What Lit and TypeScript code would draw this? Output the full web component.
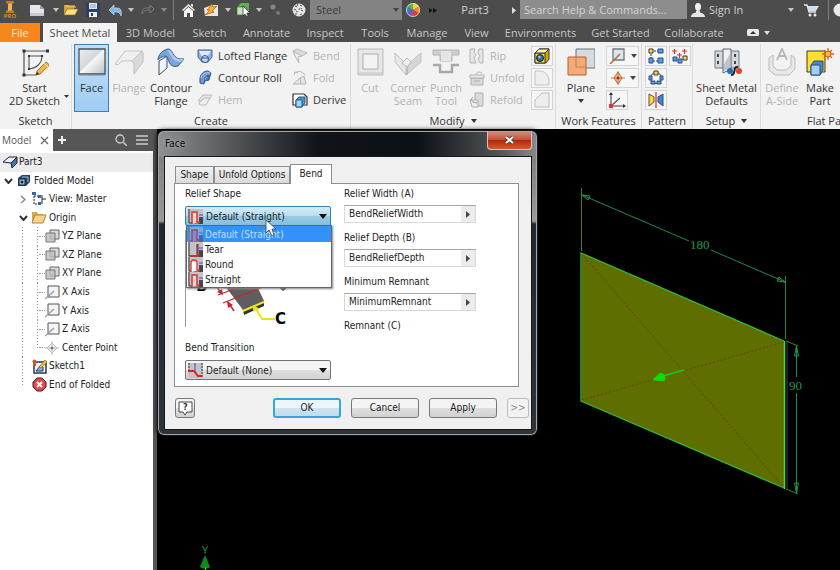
import { LitElement, html, svg, css, nothing } from "lit";
import type { SVGTemplateResult, TemplateResult } from "lit";
import { customElement } from "lit/decorators.js";
import { classMap } from "lit/directives/class-map.js";

const icon = (w: number, h: number, body: SVGTemplateResult) =>
  html`<svg class="icon" width=${w} height=${h} viewBox="0 0 ${w} ${h}" aria-hidden="true">${body}</svg>`;

const base = css`
  * { box-sizing: border-box; }
  svg { display: block; flex: none; }
  button, input, select { font: inherit; color: inherit; margin: 0; padding: 0; border: 0; background: none; border-radius: 0; }
  ul { list-style: none; margin: 0; padding: 0; }
`;

/* ---------- Quick access bar ---------- */

const caret = (fill: string) => icon(6, 4, svg`<path d="M0 0H6L3 4Z" fill=${fill}/>`);

const quick = {
  logo: icon(12, 12, svg`<path d="M2 0H10V2L8 3V9L10 10V12H2V10L4 9V3L2 2Z" fill="#c07a35"/><path d="M4 3L8 2V9L4 10Z" fill="#f3b35c"/>`),
  new: icon(14, 11, svg`<path d="M0 0H10L14 4V11H0Z" fill="#e4e6ea"/><path d="M10 0V4H14Z" fill="#9aa0a8"/><path d="M0 8H14V11H0Z" fill="#c5c9d0"/>`),
  open: icon(15, 12, svg`<path d="M1 11V1H5L6 2H11V5H4Z" fill="#d9a33a"/><path d="M1 11L4 5H15L12 11Z" fill="#ffe08a" stroke="#8a6a20" stroke-width=".7"/><path d="M3 2H12V4" stroke="#ffd35a" fill="none"/>`),
  save: icon(14, 14, svg`<path d="M0 0H14V14H1L0 13Z" fill="#27406e"/><path d="M3 0H11V6H3Z" fill="#dfe8f4"/><path d="M3 9H11V14H3Z" fill="#f1f1f1"/><path d="M5 10H7V13H5Z" fill="#27406e"/><path d="M4 2H10M4 4H10" stroke="#8aa"/>`),
  undo: icon(15, 11, svg`<path d="M1 5L6 0V3H9C13 3 14 6 13 11C12 8 11 7 8 7H6V10Z" fill="#7db4ea" stroke="#d6e8fa" stroke-width=".6"/>`),
  redo: icon(14, 10, svg`<path d="M13 4L9 0V3H6C2 3 1 5 1 9C3 6 4 5 7 5H9V8Z" fill="none" stroke="#7c7c7c"/>`),
  home: icon(13, 13, svg`<path d="M6.500 0L13 6L12 7L6.500 2L1 7L0 6Z" fill="#eee"/><path d="M2 7L6.500 3L11 7V13H8V9H5V13H2Z" fill="#f4f4f4"/><path d="M9 0H11V3L9 2Z" fill="#ddd"/>`),
  update: icon(15, 13, svg`<path d="M0 4L8 1H14V12H1Z" fill="#e8e8e8"/><path d="M8 0L3 6H6L1 11L10 8L8 7L13 2L9 3Z" fill="#f7b431" stroke="#b5650e" stroke-width=".8"/>`),
  select: icon(14, 14, svg`<path d="M0 4L4 0H12V8L9 12H0Z" fill="#5fae4f"/><path d="M0 4H9V12H0Z" fill="#c9dfc2" stroke="#2f7a28" stroke-width=".7"/><path d="M6 3V13L8 11L10 14L11 13L10 10H13Z" fill="#fff" stroke="#222" stroke-width=".7"/>`),
  dots: icon(10, 12, svg`<circle cx="3" cy="3" r="2.500" fill="#888"/><circle cx="8" cy="9" r="2" fill="#777"/>`),
  ball: icon(14, 14, svg`<circle cx="7" cy="7" r="6.500" fill="#e4e4e4"/><path d="M3 3L5 4M8 2L10 3M4 8L6 9M9 7L11 8M6 1L5 3M2 6L4 7M8 12L10 11M8 5L7 7M10 5L9 6M3 11L5 11" stroke="#555" stroke-width="1"/>`),
  wheel: icon(14, 14, svg`<path d="M7 7L7 0A7 7 0 0 1 13.100 3.500Z" fill="#f0d23a"/><path d="M7 7L13.100 3.500A7 7 0 0 1 13.100 10.500Z" fill="#f08a2c"/><path d="M7 7L13.100 10.500A7 7 0 0 1 7 14Z" fill="#dc4030"/><path d="M7 7V14A7 7 0 0 1 .9 10.500Z" fill="#8b4fb5"/><path d="M7 7L.9 10.500A7 7 0 0 1 .9 3.500Z" fill="#3c78d8"/><path d="M7 7L.9 3.500A7 7 0 0 1 7 0Z" fill="#58b548"/><circle cx="7" cy="7" r="6.500" fill="none" stroke="#ddd" stroke-width=".8"/>`),
  more: icon(8, 5, svg`<path d="M0 0L3.500 2.500L0 5ZM4 0L8 2.500L4 5Z" fill="#111"/>`),
  right: icon(4, 7, svg`<path d="M0 0L4 3.500L0 7Z" fill="#ddd"/>`),
  person: icon(14, 14, svg`<path d="M7 0C9.500 0 10 2 10 4S9 8 7 8S4 6 4 4S4.500 0 7 0Z" fill="#eee"/><path d="M0 14C0 11 3 10 5 9.500V8H9V9.500C11 10 14 11 14 14Z" fill="#e6e6e6"/>`),
  cart: icon(15, 13, svg`<path d="M0 1H3L5 8H12" fill="none" stroke="#e8e8e8" stroke-width="1.300"/><path d="M3.500 2H15L12 7H5Z" fill="#cfe0f4"/><circle cx="6" cy="11" r="1.500" fill="#eee"/><circle cx="11" cy="11" r="1.500" fill="#eee"/>`),
  help: icon(10, 14, svg`<circle cx="10" cy="7" r="6.500" fill="#e8e8e8"/>`),
};

@customElement("quick-bar")
class QuickBar extends LitElement {
  static styles = [base, css`
    :host { display: grid; height: 20px; align-items: center; background: #4c4c4c; color: #d0d0d0;
      grid-template-columns: 20px 34px 4px 24px 22px 22px 10px 24px 8px 10px 20px 26px 8px 24px 6px 26px 22px 92px 22px 18px 66px 12px 167px 22px minmax(36px, 1fr) 10px 30px 4px 10px;
      font: 11px/18px "Open Sans", "Noto Sans", sans-serif; overflow: hidden; }
    button, .cell { display: flex; align-items: center; justify-content: center; height: 20px; }
    .logo { display: flex; flex-direction: column; align-items: center; width: 20px; }
    .pro { font: bold 6px/6px "Open Sans", sans-serif; color: #d08a40; }
    .rule { justify-self: center; width: 1px; height: 20px; background: #808080; }
    .material { height: 20px; position: relative; }
    .material select { appearance: none; width: 100%; height: 20px; padding: 0 6px; background: #838383; color: #3c3c3c; }
    .material .icon { position: absolute; right: 3px; top: 8px; }
    .search { height: 19px; width: 100%; padding: 0 4px; background: #8d8d8d; align-self: start; }
    .search::placeholder { color: #d4d4d4; opacity: 1; }
    .sign { justify-content: flex-start; white-space: nowrap; }
  `];
  render() {
    const b = (name: string, pic: TemplateResult) => html`<button aria-label=${name}>${pic}</button>`;
    const c = (fill = "#c4c4c4") => b("More options", caret(fill));
    return html`
      <div class="logo">${quick.logo}<span class="pro">PRO</span></div>
      ${b("New", quick.new)}${c()}${b("Open", quick.open)}${b("Save", quick.save)}
      ${b("Undo", quick.undo)}${c()}${b("Redo", quick.redo)}${c("#8a8a8a")}
      <span class="rule"></span>
      ${b("Home", quick.home)}${b("Update", quick.update)}${c()}${b("Select", quick.select)}${c()}
      ${b("Physical", quick.dots)}${b("Material", quick.ball)}
      <div class="material"><select aria-label="Material"><option>Steel</option></select>${caret("#444")}</div>
      ${b("Appearance", quick.wheel)}${b("More tools", quick.more)}
      <span class="cell">Part3</span>
      ${b("Expand", quick.right)}
      <input class="search" aria-label="Search" placeholder="Search Help &amp; Commands..." />
      ${b("Account", quick.person)}
      <button class="sign">Sign In</button>
      ${c()}${b("Store", quick.cart)}<span class="rule"></span>${b("Help", quick.help)}
    `;
  }
}

/* ---------- Ribbon ---------- */

const rib = {
  sketch: icon(28, 29, svg`<path d="M3 3H27M3 3V27H15" fill="none" stroke="#555" stroke-width="1.200"/><path d="M8 8H21C21 15 16 20 8 21Z" fill="none" stroke="#555" stroke-width="1.100"/><path d="M1.500 1.500H4.500V4.500H1.500ZM25 1.500H28V4.500H25ZM1.500 25.500H4.500V28.500H1.500Z" fill="#333"/><path d="M7 7H9V9H7ZM20 7H22V9H20ZM7 20H9V22H7Z" fill="#333"/><path d="M15 27L16 23L25 14L28.500 17L19 26Z" fill="#f3b73e" stroke="#8a5a1c" stroke-width=".8"/><path d="M15 27L16 24L18 26Z" fill="#222"/><path d="M23.500 15.500L27 19" stroke="#fff"/>`),
  face: icon(28, 28, svg`<defs><linearGradient id="fg" x1="0" y1="0" x2="1" y2="1"><stop offset="0" stop-color="#eef0f2"/><stop offset=".45" stop-color="#d4d7da"/><stop offset=".5" stop-color="#f6f7f8"/><stop offset="1" stop-color="#b9bec3"/></linearGradient></defs><path d="M1 1H27V26H1Z" fill="url(#fg)" stroke="#48535e" stroke-width="1.300"/><path d="M1 27H27" stroke="#7f8a94"/>`),
  flange: icon(30, 28, svg`<path d="M1 16L11 3H28L18 13H8L4 17Z" fill="#efefef" stroke="#c3c3c3"/><path d="M18 13L28 3C30 5 29 9 29 14L20 26V16Z" fill="#dadada" stroke="#c3c3c3"/>`),
  contour: icon(30, 28, svg`<path d="M3 13V27L11 20V8Z" fill="#f0f3f7" stroke="#3b4c66"/><path d="M2 12C2 6 8 1 13 1C18 3 16 12 28 11L22 18C12 21 13 9 10 8C6 8 4 10 2 12Z" fill="#7aa5dc" stroke="#2d5791"/><path d="M13 2C18 4 16 12 28 11L25 14C14 14 16 5 11 3Z" fill="#a9c8ef"/>`),
  lofted: icon(16, 16, svg`<path d="M1 2H15V9L11 14H5L1 9Z" fill="#8fb3e2" stroke="#41638f"/><path d="M2 3H14L10 9H5Z" fill="#dfeaf8"/><circle cx="8" cy="11" r="3.500" fill="#c7dbf3" stroke="#2d5791"/><path d="M4.500 10H11.500" stroke="#2d5791"/>`),
  roll: icon(16, 16, svg`<path d="M3 9C3 4 7 1 11 1L14 3L13 6C10 5 8 7 8 9L7 14L3 13Z" fill="#6f9bd6" stroke="#2d5791"/><path d="M4 8C5 4 9 2 13 3" stroke="#bcd4f2" fill="none"/><path d="M10 6L13 6L12 10L8 11" fill="#4a78b8" stroke="#2d5791"/>`),
  hem: icon(16, 14, svg`<path d="M1 8L6 2H15L11 8Z" fill="#e4e4e4" stroke="#bcbcbc"/><path d="M2 10L7 5H13L9 12H3Z" fill="#ececec" stroke="#bcbcbc"/>`),
  bend: icon(16, 16, svg`<path d="M1 3L5 1L15 5L10 8Z" fill="#dedede" stroke="#b6b6b6"/><path d="M1 3L4 10L7 15L6 9L10 8L5 5Z" fill="#eee" stroke="#b6b6b6"/>`),
  fold: icon(16, 16, svg`<path d="M3 3C7 0 11 2 13 5M2 5L3 2L6 3" fill="none" stroke="#b4b4b4"/><path d="M1 14H14L12 6L8 8Z" fill="#e6e6e6" stroke="#b4b4b4"/><path d="M8 8L9 14" stroke="#b4b4b4"/>`),
  derive: icon(16, 16, svg`<path d="M1 2H12L15 5V13H1Z" fill="#fff" stroke="#333" stroke-width="1.200"/><path d="M4 8L7 5H13V11L10 15H4Z" fill="#4f94c8" stroke="#1e5c8e"/><path d="M4 8H10V15H4Z" fill="#a7d2ee" stroke="#1e5c8e"/>`),
  cut: icon(27, 28, svg`<path d="M1 1H26V27H1Z" fill="#e6e6e6" stroke="#b9b9b9"/><path d="M6 6H21V21H6Z" fill="#f3f3f3" stroke="#adadad"/><path d="M1 25H26" stroke="#c4c4c4"/>`),
  seam: icon(28, 28, svg`<path d="M1 5L12 16V27L1 14Z" fill="#e6e6e6" stroke="#c2c2c2"/><path d="M27 5L15 15L12 27L27 14Z" fill="#d6d6d6" stroke="#c2c2c2"/><path d="M8 15L13 10L17 14L13 19Z" fill="#eee" stroke="#b8b8b8"/><path d="M13 19V27" stroke="#aaa"/>`),
  punch: icon(28, 28, svg`<path d="M1 2H27V7H20V13H8V7H1Z" fill="#cecece" stroke="#b4b4b4"/><path d="M9 3H19V13H9Z" fill="#e5e5e5"/><path d="M1 17H8V24H20V17H27" fill="none" stroke="#a9a9a9" stroke-width="2.500"/>`),
  rip: icon(16, 16, svg`<path d="M1 1H6L5 4L7 7L5 10L7 15H1ZM10 1H14V15H11L9 11L11 8L9 5Z" fill="#e6e6e6" stroke="#b4b4b4"/>`),
  unfold: icon(16, 16, svg`<path d="M2 8H14V15H2Z" fill="#d9d9d9" stroke="#b0b0b0"/><path d="M1 5H15V8H1Z" fill="#e9e9e9" stroke="#b0b0b0"/><path d="M7 4C9 1 11 2 13 3" fill="none" stroke="#aaa"/><path d="M5 11H11" stroke="#aaa"/>`),
  refold: icon(16, 16, svg`<path d="M6 1H14V14H6Z" fill="#dadada" stroke="#b0b0b0"/><path d="M1 8H9V15H3Z" fill="#ececec" stroke="#b0b0b0"/><path d="M4 5C2 6 2 9 4 10L8 11" fill="none" stroke="#999"/>`),
  cube: icon(16, 16, svg`<path d="M1 5L5 1H15V11L12 15H1Z" fill="#d8a800" stroke="#333"/><path d="M1 5H11V15H1Z" fill="#ffdf3e" stroke="#333"/><path d="M1 5L5 1H15L11 5Z" fill="#fff3b5" stroke="#333"/><circle cx="6" cy="10" r="3.500" fill="#3569a8" stroke="#122"/><circle cx="5.500" cy="9" r="1.300" fill="#9fc6f0"/>`),
  round: icon(16, 16, svg`<path d="M1 1H7C12 2 15 6 15 11V15H1Z" fill="#eee" stroke="#c4c4c4"/>`),
  chamfer: icon(16, 16, svg`<path d="M1 15V8L8 1H15V15Z" fill="#eee" stroke="#bdbdbd"/>`),
  plane: icon(28, 29, svg`<path d="M9 1H28V20H9Z" fill="#d4dadd" stroke="#66747a"/><path d="M1 9H19V27H1Z" fill="#f3a770" fill-opacity=".93" stroke="#b9602a"/><path d="M9 9V19H19" fill="none" stroke="#c8814f"/>`),
  axis: icon(18, 16, svg`<path d="M4 1H15V12H4Z" fill="#dfe5e8" stroke="#6b7880" stroke-width="1.300"/><path d="M1 16L11 6" stroke="#b36a3c" stroke-width="1.500"/>`),
  point: icon(16, 14, svg`<path d="M8 1L12 7L8 13L4 7Z" fill="#f7c69c" stroke="#b9602a"/><path d="M1 7H15M8 0V14" stroke="#c7763d"/><circle cx="8" cy="7" r="1.500" fill="#933"/>`),
  ucs: icon(18, 16, svg`<path d="M3 1V14H17M3 14L12 6" fill="none" stroke="#444" stroke-width="1.100"/><path d="M1 3L3 0L5 3ZM15 12L18 14L15 16Z" fill="#333"/><path d="M1 12H5V16H1Z" fill="#d33"/>`),
  rect: icon(16, 16, svg`<path d="M3 3H13M3 3V13M13 13H5" stroke="#333" fill="none" stroke-dasharray="2 1"/><path d="M1 1H5V5H1Z" fill="#ffe04a" stroke="#333"/><path d="M10 1H15V5H10ZM1 10H5V15H1ZM10 10H15V15H10Z" fill="#5b9bdc" stroke="#234f86"/>`),
  driven: icon(16, 16, svg`<path d="M0 3H5M2.500 1V6M10 3H15M12.500 1V6M5 7H10M7.500 5V10" stroke="#d33" stroke-width="1.200"/><path d="M1 9H5V13H1ZM6 11H10V15H6Z" fill="#5b9bdc" stroke="#234f86"/><path d="M11 8H15V12H11Z" fill="#ffe04a" stroke="#333"/>`),
  circ: icon(16, 16, svg`<circle cx="8" cy="8" r="5.500" fill="none" stroke="#333"/><path d="M6 1H10V5H6Z" fill="#ffe04a" stroke="#333"/><path d="M1 6H4V10H1ZM12 6H15V10H12ZM3 11H7V14H3ZM9 11H13V14H9Z" fill="#5b9bdc" stroke="#234f86"/>`),
  mirror: icon(16, 16, svg`<path d="M1 2L6 5V10L1 14Z" fill="#ffd93b" stroke="#554"/><path d="M15 2L10 5V10L15 14Z" fill="#3f86cf" stroke="#234f86"/><path d="M8 0V16" stroke="#d33" stroke-width="1.300"/>`),
  defaults: icon(30, 28, svg`<path d="M3 3H27V20H3Z" fill="#d5d9dc" stroke="#707a82"/><path d="M11 1H19V21L11 25Z" fill="#eef0f2" stroke="#59636b"/><path d="M12 16L18 6V20L12 23Z" fill="#bfc5ca"/><path d="M5 6H7V9H5ZM5 13H7V16H5ZM22 6H24V9H22ZM22 13H24V16H22Z" fill="#444"/><circle cx="18" cy="23" r="3" fill="#1f6fb4"/><circle cx="27" cy="23" r="3" fill="#e2442f"/><path d="M26 19C20 18 25 27 19 27" fill="none" stroke="#222" stroke-width="2"/>`),
  aside: icon(28, 28, svg`<path d="M1 10L5 7V18L9 22H18L23 18V7L27 10V21L21 27H7L1 22Z" fill="#e7e7e7" stroke="#bcbcbc"/><path d="M9 12L14 1L19 12M11 8H17" fill="none" stroke="#b4b4b4" stroke-width="1.800"/>`),
  part: icon(28, 28, svg`<path d="M1 3H19V24H1Z" fill="#ffe12e" stroke="#3a3a20"/><path d="M5 17L8 13H17V22L14 27H5Z" fill="#4f86c6" stroke="#234f86"/><path d="M5 17H14V27H5Z" fill="#a9cbee" stroke="#234f86"/><path d="M22 0V12M16 6H28M18 2L26 10M26 2L18 10" stroke="#d8641c" stroke-width="1.300"/><circle cx="22" cy="6" r="3" fill="#ffb545" stroke="#c95a14"/>`),
  collapse: icon(12, 7, svg`<rect width="12" height="7" rx="1.500" fill="#e8e8e8"/><path d="M3 5H9L6 2Z" fill="#333"/>`),
};

interface Tool { label: string; pic: TemplateResult; off?: boolean; kind?: string; arrow?: boolean; }

@customElement("ribbon-bar")
class RibbonBar extends LitElement {
  static styles = [base, css`
    :host { display: block; font: 11px/13px "Open Sans", "Noto Sans", sans-serif; color: #333; overflow: hidden; }
    .tabs { display: grid; height: 22px; padding-top: 3px; background: #4c4c4c; color: #c6c6c6;
      grid-template-columns: 40px 3px 74px 67px 51px 63px 54px 46px 58px 41px 87px 73px 74px 54px; }
    .tabs button { height: 19px; white-space: nowrap; }
    .tabs .file { background: #f7861c; color: #ffe9d0; }
    .tabs .current { grid-column: 3; background: #f3f3f3; color: #4a4a4a; }
    .tabs .min { display: flex; align-items: center; justify-content: center; gap: 5px; }
    .body { display: flex; height: 87px; background: #f2f2f2; padding-top: 2px; }
    .panel { flex: none; display: flex; flex-direction: column; border-right: 1px solid #dcdcdc; }
    .tools { display: flex; height: 69px; }
    .title { height: 16px; line-height: 16px; white-space: nowrap; display: flex; align-items: center; justify-content: center; gap: 6px; }
    .p-sketch { width: 72px; } .p-create { width: 279px; } .p-modify { width: 205px; }
    .p-work { width: 86px; } .p-pattern { width: 51px; } .p-setup { width: 68px; }
    .p-flat { flex: 1 0 80px; width: 80px; border: 0; }
    .p-flat .title { justify-content: flex-start; padding-left: 46px; }
    .big { display: flex; flex-direction: column; align-items: center; width: 38px; height: 68px; padding-top: 3px; border: 1px solid transparent; white-space: nowrap; }
    .big .pic { height: 33px; }
    .slim { width: 34px; }
    .mid { width: 42px; }
    .wide { width: 46px; }
    .roomy { width: 50px; }
    .start { width: 59px; margin-left: 5px; }
    .full { width: 67px; }
    .big[disabled], .small[disabled] { color: #b2b2b2; }
    .pressed { width: 35px; background: linear-gradient(#c4def4, #9fcdf5); border: 1px solid #3f7fae; margin: 0 1px 0 2px; }
    .drop { align-self: flex-end; height: 18px; width: 7px; display: flex; }
    .down { margin-top: 5px; }
    .stack { display: flex; flex-direction: column; gap: 2px; padding-top: 2px; }
    .small { display: flex; align-items: center; gap: 5px; height: 20px; white-space: nowrap; line-height: 20px; }
    .small .pic { width: 16px; display: flex; justify-content: center; }
    .first { width: 95px; margin-left: 3px; }
    .shift { margin-left: 4px; }
    .tool { display: flex; align-items: center; justify-content: center; width: 22px; height: 20px; border: 1px solid #d4d4d4; background: #f6f6f6; }
    .split { width: 33px; gap: 4px; }
    .edge { margin-left: auto; padding-right: 2px; }
    .grid { display: grid; grid-template-columns: 22px 22px; gap: 2px; padding: 2px 0 0 3px; align-content: start; }
  `];
  big(t: Tool) {
    return html`<button class="big ${t.kind ?? ""}" ?disabled=${!!t.off}><span class="pic">${t.pic}</span>
      ${t.label.split("|").map((l) => html`<span>${l}</span>`)}
      ${t.arrow ? html`<span class="down">${caret("#333")}</span>` : nothing}</button>`;
  }
  small(t: Tool) {
    return html`<button class="small" ?disabled=${!!t.off}><span class="pic">${t.pic}</span>${t.label}</button>`;
  }
  tool(t: Tool) {
    return html`<button class=${classMap({ tool: true, split: !!t.arrow })} aria-label=${t.label} ?disabled=${!!t.off}>${t.pic}${t.arrow ? caret("#444") : nothing}</button>`;
  }
  render() {
    const tabs = ["3D Model", "Sketch", "Annotate", "Inspect", "Tools", "Manage", "View", "Environments", "Get Started", "Collaborate"];
    return html`
      <nav class="tabs">
        <button class="file">File</button>
        <button class="current">Sheet Metal</button>
        ${tabs.map((t) => html`<button>${t}</button>`)}
        <button class="min" aria-label="Minimise ribbon">${rib.collapse}${caret("#ddd")}</button>
      </nav>
      <div class="body">
        <section class="panel p-sketch">
          <div class="tools">${this.big({ label: "Start|2D Sketch", pic: rib.sketch, kind: "start" })}
            <span class="drop">${icon(5, 3, svg`<path d="M0 0H5L2.500 3Z" fill="#333"/>`)}</span></div>
          <div class="title">Sketch</div>
        </section>
        <section class="panel p-create">
          <div class="tools">
            ${this.big({ label: "Face", pic: rib.face, kind: "pressed" })}
            ${this.big({ label: "Flange", pic: rib.flange, off: true })}
            ${this.big({ label: "Contour|Flange", pic: rib.contour, kind: "wide" })}
            <div class="stack first">
              ${this.small({ label: "Lofted Flange", pic: rib.lofted })}
              ${this.small({ label: "Contour Roll", pic: rib.roll })}
              ${this.small({ label: "Hem", pic: rib.hem, off: true })}
            </div>
            <div class="stack">
              ${this.small({ label: "Bend", pic: rib.bend, off: true })}
              ${this.small({ label: "Fold", pic: rib.fold, off: true })}
              ${this.small({ label: "Derive", pic: rib.derive })}
            </div>
          </div>
          <div class="title">Create</div>
        </section>
        <section class="panel p-modify">
          <div class="tools">
            ${this.big({ label: "Cut", pic: rib.cut, off: true })}
            ${this.big({ label: "Corner|Seam", pic: rib.seam, off: true })}
            ${this.big({ label: "Punch|Tool", pic: rib.punch, off: true })}
            <div class="stack shift">
              ${this.small({ label: "Rip", pic: rib.rip, off: true })}
              ${this.small({ label: "Unfold", pic: rib.unfold, off: true })}
              ${this.small({ label: "Refold", pic: rib.refold, off: true })}
            </div>
            <div class="stack edge">
              ${this.tool({ label: "Cut cube", pic: rib.cube })}
              ${this.tool({ label: "Corner round", pic: rib.round, off: true })}
              ${this.tool({ label: "Corner chamfer", pic: rib.chamfer, off: true })}
            </div>
          </div>
          <div class="title">Modify ${caret("#333")}</div>
        </section>
        <section class="panel p-work">
          <div class="tools">
            ${this.big({ label: "Plane", pic: rib.plane, kind: "roomy", arrow: true })}
            <div class="stack edge">
              ${this.tool({ label: "Axis", pic: rib.axis, arrow: true })}
              ${this.tool({ label: "Point", pic: rib.point, arrow: true })}
              ${this.tool({ label: "UCS", pic: rib.ucs })}
            </div>
          </div>
          <div class="title">Work Features</div>
        </section>
        <section class="panel p-pattern">
          <div class="tools">
            <div class="grid">
              ${this.tool({ label: "Rectangular", pic: rib.rect })}
              ${this.tool({ label: "Sketch driven", pic: rib.driven })}
              ${this.tool({ label: "Circular", pic: rib.circ })}<span></span>
              ${this.tool({ label: "Mirror", pic: rib.mirror })}
            </div>
          </div>
          <div class="title">Pattern</div>
        </section>
        <section class="panel p-setup">
          <div class="tools">${this.big({ label: "Sheet Metal|Defaults", pic: rib.defaults, kind: "full" })}</div>
          <div class="title">Setup ${caret("#333")}</div>
        </section>
        <section class="panel p-flat">
          <div class="tools">
            ${this.big({ label: "Define|A-Side", pic: rib.aside, off: true, kind: "mid" })}
            ${this.big({ label: "Make|Part", pic: rib.part, kind: "slim" })}
          </div>
          <div class="title">Flat Pattern</div>
        </section>
      </div>`;
  }
}

/* ---------- Model browser ---------- */

const planePic = icon(15, 15, svg`<path d="M5 1H14V10H5Z" fill="#d9d9d9" stroke="#666"/><path d="M1 4H10V13H1Z" fill="#bdbdbd" fill-opacity=".8" stroke="#777"/>`);
const axisPic = icon(15, 15, svg`<path d="M3 1H14V12H3Z" fill="#f2f4f6" stroke="#555"/><path d="M0 14L9 6" stroke="#999" stroke-width="1.300"/>`);
const treePics = {
  part: icon(16, 13, svg`<path d="M1 6L7 1H15L9 7Z" fill="#e9f1fa" stroke="#223"/><path d="M9 7L15 1V7L10 12Z" fill="#4476b4" stroke="#223"/>`),
  folded: icon(14, 13, svg`<path d="M1 4L5 1H13V8L9 12H1Z" fill="#24415f"/><path d="M2 5H8V11H2Z" fill="#9fc0e2" stroke="#13273c"/><path d="M5 3H11V8" fill="none" stroke="#9fc0e2"/><circle cx="5" cy="8" r="1.500" fill="#13273c"/>`),
  view: icon(16, 14, svg`<path d="M3 1V12H8M3 4H8" fill="none" stroke="#222" stroke-dasharray="2 1"/><path d="M1 0H5V3H1ZM7 3H10V6H7ZM7 10H10V13H7Z" fill="#2d6aa8"/><path d="M11 3V12M11 7H15" stroke="#222"/>`),
  folder: icon(16, 13, svg`<path d="M1 11V1H6L7 3H12V5H4Z" fill="#d9a750"/><path d="M1 12L4 4H15L12 12Z" fill="#f6d48c" stroke="#b58332"/>`),
  center: icon(15, 14, svg`<path d="M7 2L12 7L7 12L2 7Z" fill="#f4f4f4" stroke="#b5b5b5"/><path d="M0 7H14M7 0V14" stroke="#bdbdbd"/><circle cx="7" cy="7" r="1.500" fill="#777"/>`),
  sketch: icon(15, 15, svg`<path d="M2 3H14V14H2Z" fill="#eef3f8" stroke="#26394e" stroke-width="1.500"/><path d="M4 12L9 6L11 8V12H4" fill="#8bb0d6" stroke="#26394e"/><path d="M7 8L13 1L15 3L9 9Z" fill="#f5c342" stroke="#7a5a12" stroke-width=".6"/><circle cx="2.500" cy="2.500" r="2" fill="#c55a28"/><path d="M1 4H4V7H1Z" fill="#c55a28"/>`),
  end: icon(15, 15, svg`<path d="M5 1H10L14 5V10L10 14H5L1 10V5Z" fill="#e4484a" stroke="#4a1c1c"/><path d="M5 5L10 10M10 5L5 10" stroke="#fff" stroke-width="2"/>`),
};

@customElement("model-browser")
class ModelBrowser extends LitElement {
  static styles = [base, css`
    :host { box-sizing: border-box; display: flex; flex-direction: column; width: 157px; flex: none; background: #fff; border-right: 4px solid #555;
      font: 10px/18px "DejaVu Sans Condensed", "DejaVu Sans", sans-serif; color: #222; }
    .head { display: flex; align-items: center; height: 22px; background: #565656; }
    .tab { display: flex; align-items: center; gap: 9px; width: 53px; height: 22px; padding-left: 2px; background: #fff; color: #555; font: 10px/18px "Open Sans", sans-serif; }
    .head button { margin-left: 5px; }
    .head .search { margin-left: auto; }
    .head .menu { margin: 0 5px 0 9px; }
    .tree { display: grid; grid-auto-rows: 1fr; min-height: 243px; padding-top: 2px; }
    .row { display: flex; align-items: center; gap: 3px; padding-left: 2px; white-space: nowrap; }
    .root { background: #ececec; gap: 1px; }
    .d2 { padding-left: 17px; gap: 2px; }
    .d3 { padding-left: 17px; gap: 0; }
    .d3 .icon { margin-right: 2px; }
    .toggle { width: 12px; display: flex; justify-content: center; }
    .guide { align-self: stretch; width: 15px; flex: none; background: repeating-linear-gradient(#999 0 1px, transparent 1px 3px) 5px 0 / 1px 100% no-repeat; }
    .inner { width: 7px; }
    .tick { width: 6px; border-top: 1px dotted #999; }
    .last { align-self: flex-start; height: 50%; }
  `];
  render() {
    const open = icon(9, 6, svg`<path d="M1 1L4.500 5L8 1" fill="none" stroke="#333" stroke-width="2"/>`);
    const shut = icon(6, 9, svg`<path d="M1 1L5 4.500L1 8" fill="none" stroke="#888" stroke-width="1.500"/>`);
    const leaf = (pic: TemplateResult, label: string, last = false) => html`
      <div class="row d3"><span class="guide"></span><span class="guide inner ${last ? "last" : ""}"></span>
        <span class="tick"></span>${pic}<span>${label}</span></div>`;
    return html`
      <div class="head">
        <div class="tab">Model ${icon(9, 9, svg`<path d="M1 1L8 8M8 1L1 8" stroke="#666" stroke-width="1.200"/>`)}</div>
        <button aria-label="Add panel">${icon(8, 8, svg`<path d="M4 0V8M0 4H8" stroke="#eee" stroke-width="2"/>`)}</button>
        <button class="search" aria-label="Search model">${icon(12, 12, svg`<circle cx="5" cy="5" r="4" fill="none" stroke="#ccc" stroke-width="1.300"/><path d="M8 8L12 12" stroke="#ccc" stroke-width="1.500"/>`)}</button>
        <button class="menu" aria-label="Menu">${icon(12, 10, svg`<path d="M0 1H12M0 5H12M0 9H12" stroke="#ccc" stroke-width="1.300"/>`)}</button>
      </div>
      <div class="tree">
        <div class="row root">${treePics.part}<span>Part3</span></div>
        <div class="row"><span class="toggle">${open}</span>${treePics.folded}<span>Folded Model</span></div>
        <div class="row d2"><span class="toggle">${shut}</span>${treePics.view}<span>View: Master</span></div>
        <div class="row d2"><span class="toggle">${open}</span>${treePics.folder}<span>Origin</span></div>
        ${leaf(planePic, "YZ Plane")}${leaf(planePic, "XZ Plane")}${leaf(planePic, "XY Plane")}
        ${leaf(axisPic, "X Axis")}${leaf(axisPic, "Y Axis")}${leaf(axisPic, "Z Axis")}
        ${leaf(treePics.center, "Center Point", true)}
        <div class="row d3"><span class="guide"></span>${treePics.sketch}<span>Sketch1</span></div>
        <div class="row d3"><span class="guide last"></span>${treePics.end}<span>End of Folded</span></div>
      </div>`;
  }
}

/* ---------- Face dialog ---------- */

const reliefPic = (kind: string) => icon(15, 15, svg`
  <path d="M0 0H15V15H0Z" fill="#c3c3c3"/><path d="M1 0V14H15" fill="none" stroke="#333"/>
  <path d="M11 8H15V15H11Z" fill="#444"/><path d="M11 6H15M11 9H15" stroke="#3a49c0"/>
  ${kind === "tear" ? svg`<path d="M10 2V14H2" fill="none" stroke="#c22" stroke-width="1.300"/><path d="M9 2V13" stroke="#333"/>`
    : kind === "round" ? svg`<path d="M3 15V6A3 3 0 0 1 9 6V13H12" fill="#fff" stroke="#d33" stroke-width="1.300"/>`
    : kind === "chosen" ? svg`<path d="M0 0H15V15H0Z" fill="#3391f8" fill-opacity=".5"/><path d="M4 15V3H9V13H12" fill="#7a90d0" stroke="#a04468" stroke-width="1.500"/>`
    : svg`<path d="M4 15V3H9V13H12" fill="#e4d8d8" stroke="#d33" stroke-width="1.500"/>`}`);

@customElement("face-dialog")
class FaceDialog extends LitElement {
  static styles = [base, css`
    :host { display: block; width: 381px; padding: 0 5px 5px 6px; border: 1px solid #15171a; border-radius: 7px;
      background: linear-gradient(90deg, #8d8f91 0, #6f7174 40px, #101418 160px, #0c1116 260px, #505355 340px, #8a8a8a 100%) 0 0 / 100% 26px no-repeat, linear-gradient(#777 0, #999 90px, #23282c 93px, #2e3438 100%);
      box-shadow: inset 0 0 0 1px #a3a6a8, 0 0 5px #000;
      font: 10px/20px "DejaVu Sans Condensed", "DejaVu Sans", sans-serif; color: #1c1c1c; }
    .bar { display: flex; justify-content: space-between; height: 25px; padding-left: 1px; line-height: 26px; color: #0a0a0a; text-shadow: 0 0 5px #ccc; }
    .close { width: 45px; height: 19px; display: flex; align-items: center; justify-content: center; border: 1px solid #d9c0b8; border-top: 0; border-radius: 0 0 4px 4px;
      background: linear-gradient(#d79080, #c6503a 48%, #ad260d 50%, #d55b2d); }
    .client { border: 1px solid #16191b; background: #f0f0f0; padding: 6px 12px 11px 9px; }
    .tabs { display: flex; align-items: flex-end; padding-left: 1px; height: 20px; }
    .tabs button { height: 17px; line-height: 16px; border: 1px solid #8b8e92; border-bottom: 0; background: linear-gradient(#f2f2f2, #dadada); }
    .t1 { width: 39px; } .t2 { width: 76px; }
    .tabs .on { width: 42px; height: 20px; background: #fff; padding-bottom: 2px; position: relative; z-index: 1; margin-bottom: -1px; }
    .page { display: grid; grid-template-columns: 159px 1fr; background: #fff; border: 1px solid #8b8e92; padding: 0 0 6px 10px; min-height: 204px; }
    label, .caption { display: block; height: 20px; }
    .field { display: flex; flex-direction: column; gap: 2px; }
    .combo { position: relative; width: 146px; }
    .combo select { appearance: none; display: block; width: 100%; height: 20px; padding-left: 20px; border: 1px solid #70757a; border-radius: 2px; background: linear-gradient(#f4f4f4 48%, #dedede 52%, #d2d2d2); }
    .combo .hot { border-color: #3c7fb1; background: linear-gradient(#d5ebf6, #bcdcee 48%, #98cbe6 52%, #86bedb); }
    .lead, .arrow { position: absolute; left: 3px; top: 3px; }
    .arrow { left: auto; right: 4px; top: 8px; }
    .list { position: absolute; left: 1px; top: 19px; width: 146px; border: 1px solid #666; background: #fff; z-index: 2; box-shadow: 1px 1px 2px #888; }
    .list li { display: flex; align-items: center; gap: 2px; height: 15px; line-height: 15px; padding-left: 1px; }
    .list .sel { height: 16px; background: #3391f8; color: #bfe0ff; }
    .pointer { position: absolute; left: 80px; top: 13px; z-index: 3; }
    .preview { height: 112px; }
    .param { display: flex; flex-direction: column; gap: 1px; padding-bottom: 5px; }
    .entry { display: flex; width: 132px; height: 18px; border: 1px solid #d5d8dc; border-top-color: #a4a8ae; }
    .entry input { flex: 1; min-width: 0; padding-left: 4px; }
    .entry button { width: 14px; display: flex; align-items: center; justify-content: center; background: #ececec; }
    .foot { display: flex; align-items: center; gap: 10px; padding: 11px 0 0 1px; margin-right: -10px; }
    .foot button { width: 68px; height: 20px; line-height: 18px; border: 1px solid #757a7e; border-radius: 3px; background: linear-gradient(#f4f4f4 48%, #dedede 52%, #d2d2d2); }
    .foot .help { width: 20px; margin-right: auto; display: flex; align-items: center; justify-content: center; }
    .foot .ok { border: 2px solid #35a6dc; line-height: 16px; background: linear-gradient(#eef6fa 48%, #cfe3ee 52%, #c2dcea); }
    .foot .more { width: 22px; color: #8d8d8d; background: #f2f2f2; border-color: #b9bcc0; }
  `];
  param(id: string, label: string) {
    return html`<label for=${id}>${label}</label>`;
  }
  entry(id: string, label: string, value: string) {
    return html`<div class="param">${this.param(id, label)}
      <div class="entry"><input id=${id} .value=${value} />
        <button aria-label="${label} options">${icon(4, 7, svg`<path d="M0 0L4 3.500L0 7Z" fill="#444"/>`)}</button></div></div>`;
  }
  render() {
    const down = icon(8, 5, svg`<path d="M0 0H8L4 5Z" fill="#111"/>`);
    return html`
      <div class="bar"><span>Face</span><button class="close" aria-label="Close">${icon(9, 8, svg`<path d="M1 1L8 7M8 1L1 7" stroke="#533" stroke-width="3.500"/><path d="M1 1L8 7M8 1L1 7" stroke="#fff" stroke-width="2"/>`)}</button></div>
      <div class="client">
        <div class="tabs"><button class="t1">Shape</button><button class="t2">Unfold Options</button><button class="on">Bend</button></div>
        <div class="page">
          <div>
            <div class="field">
              <label for="relief">Relief Shape</label>
              <div class="combo">
                <select id="relief" class="hot"><option>Default (Straight)</option></select>
                <span class="lead">${reliefPic("straight")}</span><span class="arrow">${down}</span>
                <ul class="list">
                  <li class="sel">${reliefPic("chosen")}Default (Straight)</li>
                  <li>${reliefPic("tear")}Tear</li>
                  <li>${reliefPic("round")}Round</li>
                  <li>${reliefPic("straight")}Straight</li>
                </ul>
                <span class="pointer">${icon(12, 18, svg`<path d="M1 1V14L4 11L7 17L9 16L7 10H11Z" fill="#fff" stroke="#456" stroke-width=".9"/>`)}</span>
              </div>
            </div>
            <div class="preview">
              <svg width="140" height="104" viewBox="184 226 140 104" role="img" aria-label="Bend relief preview">
                <path d="M184.500 230V327" stroke="#999"/>
                <path d="M224 286L242 310L263 301L256 286Z" fill="#5e5e5e"/>
                <path d="M242 310L263 301V306L243 315Z" fill="#333"/>
                <path d="M242 311L263 302" stroke="#f2ea1e" stroke-width="2"/>
                <path d="M217 295L241 286M222 303L262 287" stroke="#c22828" stroke-width="1.300"/>
                <path d="M227 302L233 311M215 286L221 294" stroke="#c22828" stroke-width="1.500"/>
                <path d="M226 301L232 305L227 308ZM222 295L216 292L221 289Z" fill="#c22828"/>
                <path d="M276 286H289L282 291Z" fill="#444"/>
                <path d="M254 307L261 319H274" fill="none" stroke="#e8df20" stroke-width="1.800"/>
                <path d="M252 305L259 309L252 312Z" fill="#e8df20"/>
                <text x="195" y="291" font-family="DejaVu Sans" font-weight="bold" font-size="15">B</text>
                <text x="274" y="324" font-family="DejaVu Sans" font-weight="bold" font-size="15">C</text>
              </svg>
            </div>
            <div class="field">
              <label for="transition">Bend Transition</label>
              <div class="combo">
                <select id="transition"><option>Default (None)</option></select>
                <span class="lead">${icon(15, 15, svg`<path d="M0 0H15V15H0Z" fill="#c3c3c3"/><path d="M1 0V8M14 0V14" stroke="#333" stroke-dasharray="2 1"/><path d="M7 0V8" stroke="#3a49c0"/><path d="M0 8H6L10 13H14" fill="none" stroke="#d22" stroke-width="2"/>`)}</span>
                <span class="arrow">${down}</span>
              </div>
            </div>
          </div>
          <div>
            ${this.entry("width", "Relief Width (A)", "BendReliefWidth")}
            ${this.entry("depth", "Relief Depth (B)", "BendReliefDepth")}
            ${this.entry("minimum", "Minimum Remnant", "MinimumRemnant")}
            <span class="caption">Remnant (C)</span>
          </div>
        </div>
        <div class="foot">
          <button class="help" aria-label="Help">${icon(15, 15, svg`<path d="M1 1H14V11H9L7 14L5 11H1Z" fill="#fff" stroke="#444"/><text x="5" y="9" font-family="DejaVu Sans Condensed" font-size="9" font-weight="bold" fill="#333">?</text>`)}</button>
          <button class="ok">OK</button><button>Cancel</button><button>Apply</button>
          <button class="more">&gt;&gt;</button>
        </div>
      </div>`;
  }
}

/* ---------- Graphics window ---------- */

@customElement("sketch-view")
class SketchView extends LitElement {
  static styles = [base, css`
    :host { display: block; position: relative; flex: 1; min-width: 0; background: #000; }
    .scene { position: absolute; left: 0; top: 0; }
    .float { position: absolute; left: 0; top: 1px; }
    text { font-family: "Liberation Serif", "DejaVu Serif", serif; fill: #1e9a50; }
    .axis { font-family: "Open Sans", sans-serif; }
  `];
  render() {
    return html`
      <svg class="scene" width="683" height="441" viewBox="157 129 683 441" role="img" aria-label="Sheet metal face, 180 by 90">
        <path d="M581.500 253L784 341V488L581.500 401Z" fill="#5f6e00"/>
        <path d="M582 254L784 488M582 400L784 342" stroke="#6e3c22" stroke-dasharray="2 2"/>
        <path d="M784 488L581 401V253L784 341" fill="none" stroke="#36b43a" stroke-width="1.300"/>
        <path d="M784.500 341V489" stroke="#3fe03f" stroke-width="1.500"/>
        <path d="M787 342V489" stroke="#5c2f66"/>
        <path d="M581.500 188V251M785.500 276V339M582 195L689 241M711 250L785 282M786 341L798 346M786 489L798 494M796.500 346V377M796.500 393V493" stroke="#1f8a48" fill="none"/>
        <path d="M582 195L590 196L588 200ZM785 282L779 277L777 281ZM796.500 346L794.500 356H798.500ZM796.500 493L794.500 483H798.500Z" stroke="#1f9a50" fill="none"/>
        <text x="690" y="249" font-size="13">180</text>
        <text x="789" y="390" font-size="13">90</text>
        <path d="M684 370L660 377" stroke="#16d016" stroke-width="1.500"/>
        <path d="M652 380L660 373C664 373 666 376 665 380C664 382 660 381 652 380Z" fill="#0be00b"/>
        <text class="axis" x="202" y="554" font-size="11">Y</text>
        <path d="M205 555L210 567C208 569 202 569 200 567Z" fill="#0f8a1c"/><path d="M205.500 567V570" stroke="#3c4"/>
      </svg>
      <face-dialog class="float"></face-dialog>`;
  }
}

@customElement("app-root")
class AppRoot extends LitElement {
  static styles = css`
    :host { display: flex; flex-direction: column; min-height: 100vh; background: #000; overflow: hidden; }
    .work { display: flex; flex: 1; min-height: 440px; }
  `;
  render() {
    return html`<quick-bar></quick-bar><ribbon-bar></ribbon-bar>
      <div class="work"><model-browser></model-browser><sketch-view></sketch-view></div>`;
  }
}
